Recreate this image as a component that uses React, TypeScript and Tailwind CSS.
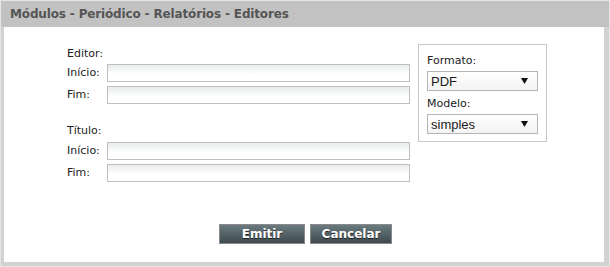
import React from "react";

const Input = () => (
  <div className="h-[18px] w-[303px] border border-[#bfbfbf] bg-gradient-to-b from-[#e9eded] to-white to-60%" />
);

const Select = ({ value }: { value: string }) => (
  <div className="flex h-[20px] w-[111px] items-center justify-between border border-[#b5b5b5] bg-gradient-to-b from-white to-[#f3f3f3] pl-[3px] pr-[9px]">
    <span className="font-['Liberation_Sans',Arial,sans-serif] text-[13px] leading-none text-[#1a1a1a]">{value}</span>
    <svg width="7" height="6" viewBox="0 0 7 6">
      <path d="M0 0 H7 L3.5 6 Z" fill="#111" />
    </svg>
  </div>
);

const Row = ({ label }: { label: string }) => (
  <div className="flex items-center">
    <span className="w-[40px]">{label}</span>
    <Input />
  </div>
);

export default function App() {
  return (
    <div className="w-[610px] h-[267px] bg-[#dcdcdc] font-['DejaVu_Sans',Verdana,sans-serif] text-[11px] text-[#222]">
      <div className="flex h-full flex-col border border-[#e6e6e6] pb-[4px] pl-[3px] pr-[5px] bg-[#d2d2d2]">
        <div className="-ml-[3px] -mr-[5px] flex h-[26px] items-center bg-[#c2c2c2] pl-[9px]">
          <span className="text-[12px] font-bold text-[#555] tracking-[-0.15px]">Módulos - Periódico - Relatórios - Editores</span>
        </div>
        <div className="flex flex-1 flex-col bg-white">
          <div className="flex pt-[17px]">
            <div className="flex flex-col pl-[63px] pt-[2px]">
              <div className="h-[16px] leading-[16px]">Editor:</div>
              <div className="mt-[2px] flex flex-col gap-[4px]">
                <Row label="Início:" />
                <Row label="Fim:" />
              </div>
              <div className="mt-[19px] h-[16px] leading-[16px]">Título:</div>
              <div className="mt-[3px] flex flex-col gap-[4px]">
                <Row label="Início:" />
                <Row label="Fim:" />
              </div>
            </div>
            <div className="ml-[8px] flex h-[98px] w-[129px] flex-col border border-[#c8c8c8] pl-[8px] pt-[8px]">
              <div className="h-[16px] leading-[16px]">Formato:</div>
              <div className="mt-[2px]"><Select value="PDF" /></div>
              <div className="mt-[5px] h-[16px] leading-[16px]">Modelo:</div>
              <div className="mt-[2px]"><Select value="simples" /></div>
            </div>
          </div>
          <div className="mt-auto mb-[18px] flex justify-center gap-[5px] pl-[3px]">
            <button className="flex h-[20px] w-[86px] items-center justify-center border border-[#8a8a8a] bg-gradient-to-b from-[#6a7b80] to-[#3e4a4f] text-[12px] font-bold text-white [text-shadow:0_1px_0_#222]">Emitir</button>
            <button className="flex h-[20px] w-[82px] items-center justify-center border border-[#8a8a8a] bg-gradient-to-b from-[#6a7b80] to-[#3e4a4f] text-[12px] font-bold text-white [text-shadow:0_1px_0_#222]">Cancelar</button>
          </div>
        </div>
      </div>
    </div>
  );
}
